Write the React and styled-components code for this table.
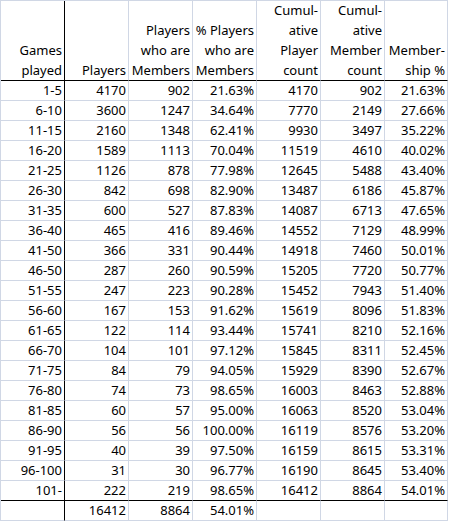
import styled, { createGlobalStyle } from "styled-components";

const GlobalStyle = createGlobalStyle`
  body {
    margin: 0;
    background: #ffffff;
    font-family: "Noto Sans", "Liberation Sans", sans-serif;
  }
`;

const headers = [
  ["Games", "played"],
  ["Players"],
  ["Players", "who are", "Members"],
  ["% Players", "who are", "Members"],
  ["Cumul-", "ative", "Player", "count"],
  ["Cumul-", "ative", "Member", "count"],
  ["Member-", "ship %"],
];

const rows = [
  ["1-5", 4170, 902, "21.63%", 4170, 902, "21.63%"],
  ["6-10", 3600, 1247, "34.64%", 7770, 2149, "27.66%"],
  ["11-15", 2160, 1348, "62.41%", 9930, 3497, "35.22%"],
  ["16-20", 1589, 1113, "70.04%", 11519, 4610, "40.02%"],
  ["21-25", 1126, 878, "77.98%", 12645, 5488, "43.40%"],
  ["26-30", 842, 698, "82.90%", 13487, 6186, "45.87%"],
  ["31-35", 600, 527, "87.83%", 14087, 6713, "47.65%"],
  ["36-40", 465, 416, "89.46%", 14552, 7129, "48.99%"],
  ["41-50", 366, 331, "90.44%", 14918, 7460, "50.01%"],
  ["46-50", 287, 260, "90.59%", 15205, 7720, "50.77%"],
  ["51-55", 247, 223, "90.28%", 15452, 7943, "51.40%"],
  ["56-60", 167, 153, "91.62%", 15619, 8096, "51.83%"],
  ["61-65", 122, 114, "93.44%", 15741, 8210, "52.16%"],
  ["66-70", 104, 101, "97.12%", 15845, 8311, "52.45%"],
  ["71-75", 84, 79, "94.05%", 15929, 8390, "52.67%"],
  ["76-80", 74, 73, "98.65%", 16003, 8463, "52.88%"],
  ["81-85", 60, 57, "95.00%", 16063, 8520, "53.04%"],
  ["86-90", 56, 56, "100.00%", 16119, 8576, "53.20%"],
  ["91-95", 40, 39, "97.50%", 16159, 8615, "53.31%"],
  ["96-100", 31, 30, "96.77%", 16190, 8645, "53.40%"],
  ["101-", 222, 219, "98.65%", 16412, 8864, "54.01%"],
];

const totals = ["", 16412, 8864, "54.01%", "", "", ""];

const GRID = "#d0d7e5";

const Sheet = styled.div`
  display: grid;
  grid-template-columns: repeat(6, 64px) 63px;
  width: max-content;
  border-left: 1px solid ${GRID};
  border-top: 1px solid ${GRID};
`;

const Cell = styled.div`
  box-sizing: border-box;
  height: ${({ $header }) => ($header ? "80px" : "20px")};
  border-right: 1px solid ${({ $first }) => ($first ? "#000" : GRID)};
  border-bottom: 1px solid ${({ $rule }) => ($rule ? "#000" : GRID)};
  padding: 0 2px 0 0;
  display: flex;
  flex-direction: column;
  justify-content: flex-end;
  align-items: flex-end;
  font-size: 13px;
  line-height: 20px;
  color: #000;
  white-space: nowrap;
`;

const Line = styled.span`
  display: block;
  height: 20px;
`;

const Value = styled.span`
  display: block;
  height: 19px;
  line-height: 19px;
  padding-top: 1px;
`;

export default function App() {
  return (
    <>
      <GlobalStyle />
      <Sheet>
        {headers.map((lines, i) => (
          <Cell key={`h${i}`} $header $rule $first={i === 0}>
            {lines.map((t) => (
              <Line key={t}>{t}</Line>
            ))}
          </Cell>
        ))}
        {rows.map((row, r) =>
          row.map((v, c) => (
            <Cell
              key={`${r}-${c}`}
              $first={c === 0}
              $rule={r === rows.length - 1}
            >
              <Value>{v}</Value>
            </Cell>
          ))
        )}
        {totals.map((v, c) => (
          <Cell key={`t${c}`} $first={c === 0}>
            <Value>{v}</Value>
          </Cell>
        ))}
      </Sheet>
    </>
  );
}
